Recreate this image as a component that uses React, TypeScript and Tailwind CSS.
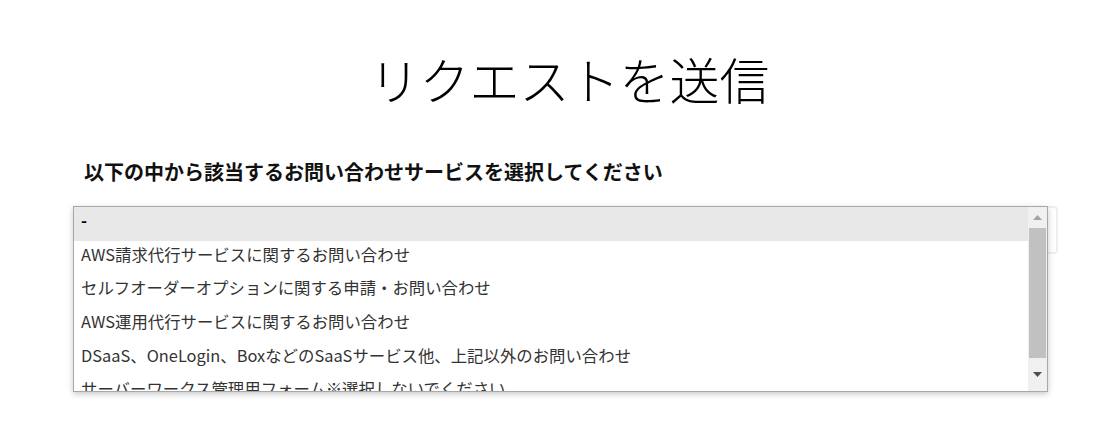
const options = [
  '-',
  'AWS請求代行サービスに関するお問い合わせ',
  'セルフオーダーオプションに関する申請・お問い合わせ',
  'AWS運用代行サービスに関するお問い合わせ',
  'DSaaS、OneLogin、BoxなどのSaaSサービス他、上記以外のお問い合わせ',
  'サーバーワークス管理用フォーム※選択しないでください',
];

const font = { fontFamily: '"Noto Sans CJK JP", "Noto Sans", sans-serif' };

export default function App() {
  return (
    <div className="min-h-[433px] w-full bg-white" style={font}>
      <div className="ml-[73px] w-[985px] pt-[45px]">
        <h1 className="pl-[8px] text-center text-[50px] font-light leading-[66px] text-black">
          リクエストを送信
        </h1>

        <p className="mt-[47px] pl-[11px] text-[20px] font-bold leading-[28px] text-[#111]">
          以下の中から該当するお問い合わせサービスを選択してください
        </p>

        <div className="relative mt-[20px]">
          {/* closed select behind the open list */}
          <div className="h-[48px] w-full rounded-[4px] border-2 border-[#eeeeee] bg-white" />

          <div className="absolute left-0 top-0 flex h-[186px] w-[975px] border border-[#a8a8a8] bg-white shadow-[0_2px_6px_rgba(0,0,0,0.22)]">
            <ul className="flex-1 overflow-hidden">
              {options.map((opt, i) => (
                <li
                  key={opt}
                  className={`h-[33.7px] px-[7px] pt-[1px] text-[16.4px] leading-[24px] text-[#333] ${
                    i === 0 ? 'bg-[#e8e8e8] font-bold text-black' : ''
                  }`}
                >
                  {opt}
                </li>
              ))}
            </ul>

            <div className="flex w-[19px] flex-col items-center bg-[#f0f0f0]">
              <div className="flex h-[21px] items-center justify-center">
                <svg width="9" height="5" viewBox="0 0 9 5">
                  <path d="M4.5 0L9 5H0z" fill="#a3a3a3" />
                </svg>
              </div>
              <div className="h-[130px] w-[17px] bg-[#c1c1c1]" />
              <div className="flex flex-1 items-center justify-center">
                <svg width="9" height="5" viewBox="0 0 9 5">
                  <path d="M0 0h9L4.5 5z" fill="#505050" />
                </svg>
              </div>
            </div>
          </div>
        </div>
      </div>
    </div>
  );
}
